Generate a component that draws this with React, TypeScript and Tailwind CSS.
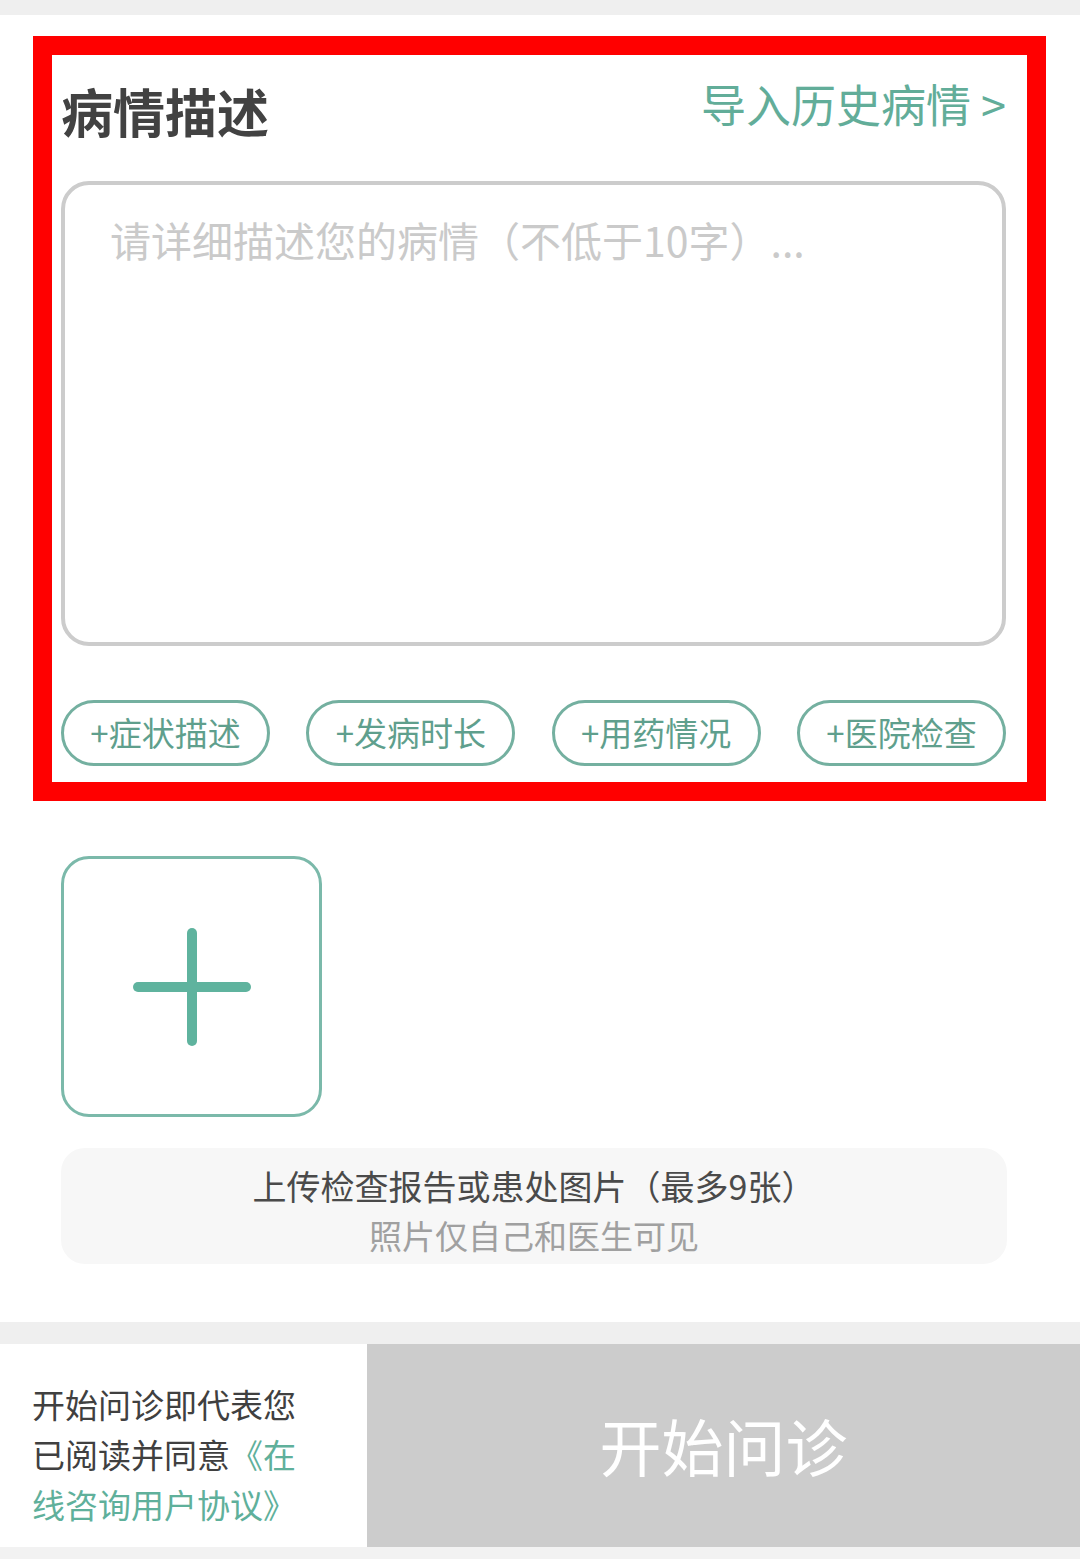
import { Fragment } from 'react'

const chips = ['+症状描述', '+发病时长', '+用药情况', '+医院检查']

function PlusIcon() {
  return (
    <svg width="118" height="118" viewBox="0 0 118 118" fill="none">
      <line x1="5" y1="59" x2="113" y2="59" stroke="#5fb39e" strokeWidth="10" strokeLinecap="round" />
      <line x1="59" y1="5" x2="59" y2="113" stroke="#5fb39e" strokeWidth="10" strokeLinecap="round" />
    </svg>
  )
}

export default function App() {
  return (
    <div className="w-[1080px] h-[1559px] bg-white flex flex-col font-['Noto_Sans_CJK_SC','Noto_Sans',sans-serif] overflow-hidden">
      <div className="h-[15px] bg-[#efefef] shrink-0" />

      <div className="pt-[21px] pl-[33px]">
        {/* red highlight box */}
        <div className="w-[1013px] h-[765px] border-[19px] border-[#ff0000] pl-[9px] pr-[21px] flex flex-col">
          <div className="pt-[25px] flex items-start justify-between">
            <h2 className="text-[52px] leading-[62px] font-bold text-[#424242]">病情描述</h2>
            <button className="text-[45px] leading-[56px] text-[#62ad99] -mt-[4px]">导入历史病情 &gt;</button>
          </div>

          <div className="mt-[39px] h-[465px] border-[4px] border-[#cccccc] rounded-[28px] pl-[45px] pt-[30px]">
            <p className="text-[41px] leading-[48px] text-[#cacaca]">请详细描述您的病情（不低于10字）...</p>
          </div>

          <div className="mt-[54px] flex justify-between">
            {chips.map((c) => (
              <Fragment key={c}>
                <div className="w-[209px] h-[66px] rounded-full border-[3px] border-[#74b0a0] flex items-center justify-center text-[33px] text-[#5f9f8d]">
                  {c}
                </div>
              </Fragment>
            ))}
          </div>
        </div>
      </div>

      <div className="pl-[61px] pt-[55px]">
        <div className="w-[261px] h-[261px] border-[3px] border-[#7bb9aa] rounded-[28px] flex items-center justify-center">
          <PlusIcon />
        </div>
      </div>

      <div className="pl-[61px] pt-[31px]">
        <div className="w-[946px] h-[116px] bg-[#f7f7f7] rounded-[24px] flex flex-col items-center justify-center pt-[8px]">
          <p className="text-[34px] leading-[50px] text-[#4a4a4a]">上传检查报告或患处图片（最多9张）</p>
          <p className="text-[33px] leading-[48px] text-[#a0a0a0]">照片仅自己和医生可见</p>
        </div>
      </div>

      <div className="mt-[58px] h-[22px] bg-[#efefef] shrink-0" />

      <div className="h-[203px] flex shrink-0">
        <div className="w-[367px] pl-[32px] pt-[35px] text-[33px] leading-[50px] text-[#404040]">
          开始问诊即代表您
          <br />
          已阅读并同意<span className="text-[#5fb09b]">《在</span>
          <br />
          <span className="text-[#5fb09b]">线咨询用户协议》</span>
        </div>
        <button className="flex-1 bg-[#cccccc] text-white text-[62px] flex items-center justify-center">
          开始问诊
        </button>
      </div>

      <div className="h-[12px] bg-[#f2f2f2] shrink-0" />
    </div>
  )
}
